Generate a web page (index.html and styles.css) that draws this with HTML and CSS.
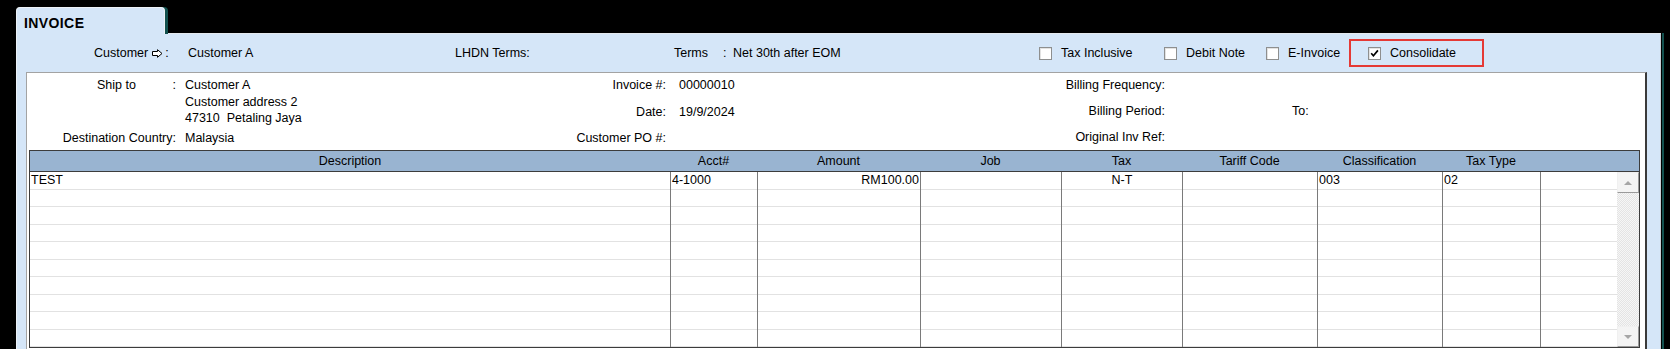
FILE: index.html
```html
<!DOCTYPE html>
<html lang="en">
<head>
    <meta charset="UTF-8">
    <title>Invoice</title>
    <link rel="stylesheet" href="styles.css">
</head>
<body>

<div class="window">
    <!-- Tab -->
    <div class="tab">INVOICE</div>

    <div class="panel">
        <!-- Baris atas: customer, terms, checkbox -->
        <div class="panel-head">
            <div class="hd-cust">Customer<svg class="arrow" width="11" height="9" viewBox="0 0 11 9"><path d="M0.5 2.5 H5.5 V0.7 L10 4.5 L5.5 8.3 V6.5 H0.5 Z" fill="#fff" stroke="#000" stroke-width="1"/></svg><span class="colon">:</span></div>
            <div class="hd-custval">Customer A</div>
            <div class="hd-lhdn">LHDN Terms:</div>
            <div class="hd-terms">Terms</div>
            <div class="hd-colon">:</div>
            <div class="hd-termsval">Net 30th after EOM</div>

            <div class="chk chk-tax"><span class="box"></span>Tax Inclusive</div>
            <div class="chk chk-debit"><span class="box"></span>Debit Note</div>
            <div class="chk chk-einv"><span class="box"></span>E-Invoice</div>
            <div class="chk chk-hl"><span class="box"><svg width="9" height="9" viewBox="0 0 9 9"><path d="M1.2 4.3 L3.4 6.8 L7.9 1.4" fill="none" stroke="#000" stroke-width="1.7"/></svg></span>Consolidate</div>
        </div>

        <div class="sheet">
            <!-- Info invoice -->
            <div class="info">
                <div class="info-left">
                    <div class="ship">
                        <div class="ship-label"><span>Ship to</span><span>:</span></div>
                        <div class="ship-val">
                            <div>Customer A</div>
                            <div>Customer address 2</div>
                            <div>47310&nbsp; Petaling Jaya</div>
                        </div>
                    </div>
                    <div class="dest">
                        <div class="dest-label">Destination Country:</div>
                        <div class="ship-val">Malaysia</div>
                    </div>
                </div>
                <div class="info-mid">
                    <div class="lbl">Invoice #:</div><div>00000010</div>
                    <div class="lbl">Date:</div><div>19/9/2024</div>
                    <div class="lbl">Customer PO #:</div><div></div>
                </div>
                <div class="info-right">
                    <div class="lbl">Billing Frequency:</div><div></div><div></div>
                    <div class="lbl">Billing Period:</div><div></div><div>To:</div>
                    <div class="lbl">Original Inv Ref:</div><div></div><div></div>
                </div>
            </div>

            <!-- Tabel item -->
            <div class="grid">
                <div class="grid-head">
                    <span>Description</span><span>Acct#</span><span>Amount</span><span>Job</span><span>Tax</span><span>Tariff Code</span><span>Classification</span><span>Tax Type</span><span></span>
                </div>
                <div class="grid-body">
                    <div class="rows">
                        <div class="row"><span>TEST</span><span>4-1000</span><span class="num">RM100.00</span><span></span><span class="mid">N-T</span><span></span><span>003</span><span>02</span><span></span></div>
                        <div class="row"><span></span><span></span><span></span><span></span><span></span><span></span><span></span><span></span><span></span></div>
                        <div class="row"><span></span><span></span><span></span><span></span><span></span><span></span><span></span><span></span><span></span></div>
                        <div class="row"><span></span><span></span><span></span><span></span><span></span><span></span><span></span><span></span><span></span></div>
                        <div class="row"><span></span><span></span><span></span><span></span><span></span><span></span><span></span><span></span><span></span></div>
                        <div class="row"><span></span><span></span><span></span><span></span><span></span><span></span><span></span><span></span><span></span></div>
                        <div class="row"><span></span><span></span><span></span><span></span><span></span><span></span><span></span><span></span><span></span></div>
                        <div class="row"><span></span><span></span><span></span><span></span><span></span><span></span><span></span><span></span><span></span></div>
                        <div class="row"><span></span><span></span><span></span><span></span><span></span><span></span><span></span><span></span><span></span></div>
                        <div class="row"><span></span><span></span><span></span><span></span><span></span><span></span><span></span><span></span><span></span></div>
                    </div>
                    <div class="vscroll">
                        <div class="sbtn"><span class="tri-up"></span></div>
                        <div class="track"></div>
                        <div class="sbtn"><span class="tri-down"></span></div>
                    </div>
                </div>
            </div>
        </div>
    </div>
</div>

</body>
</html>
```

FILE: styles.css
```css
body {
    margin: 0;
    height: 349px;
    overflow: hidden;
    background-color: #000;
    font-family: "Liberation Sans", Arial, sans-serif;
    font-size: 12.5px;
    color: #000;
}

.window {
    padding: 7px 0 0 16px;
    width: 1645px;
}

/* Tab */
.tab {
    position: relative;
    z-index: 1;
    width: 149px;
    height: 27px;
    margin-bottom: -1px;
    box-sizing: border-box;
    padding: 5px 0 0 7px;
    line-height: 20px;
    background-color: #d5e6f8;
    border: 1px solid #edf2f7;
    border-bottom: none;
    border-radius: 4px 4px 0 0;
    box-shadow: 3px 0 0 #12504e;
    font-size: 14px;
    font-weight: bold;
    letter-spacing: 0.4px;
}

.panel {
    height: 330px;
    box-sizing: border-box;
    background-color: #d5e6f8;
    border-top: 1px solid #e4e9ee;
    border-left: 1px solid #edf2f7;
    border-right: 1px solid #c6ced6;
    box-shadow: 1px 0 0 #000, 3px 0 0 #12504e;
}

/* Baris atas */
.panel-head {
    display: flex;
    align-items: center;
    height: 38px;
    padding-left: 77px;
    white-space: nowrap;
}

.hd-cust {
    width: 94px;
    display: flex;
    align-items: center;
}

.arrow {
    margin-left: 4px;
}

.colon {
    margin-left: 2px;
}

.hd-custval { width: 267px; }
.hd-lhdn { width: 219px; }
.hd-terms { width: 49px; }
.hd-colon { width: 10px; }
.hd-termsval { width: 306px; }

.chk {
    display: flex;
    align-items: center;
}

.chk-tax { width: 125px; }
.chk-debit { width: 102px; }
.chk-einv { width: 83px; }

.chk-hl {
    width: 135px;
    height: 28px;
    box-sizing: border-box;
    padding-left: 17px;
    border: 2px solid #e53935;
}

.box {
    width: 13px;
    height: 13px;
    box-sizing: border-box;
    margin-right: 9px;
    background-color: #fff;
    border: 1px solid #8e8f8f;
    box-shadow: inset 1px 1px 0 #e2e2e2;
    display: flex;
    justify-content: center;
    align-items: center;
}

/* Area putih */
.sheet {
    height: 300px;
    margin: 0 13px 0 9px;
    background-color: #fff;
    border-top: 1px solid #a3a3a3;
    border-left: 1px solid #a3a3a3;
    border-right: 2px solid #3a3a3a;
}

.info {
    display: flex;
    height: 77px;
    box-sizing: border-box;
    padding-top: 4px;
    white-space: nowrap;
}

.info-left {
    width: 493px;
}

.ship,
.dest {
    display: flex;
    line-height: 16.5px;
}

.dest {
    margin-top: 3.5px;
}

.ship-label {
    width: 149px;
    box-sizing: border-box;
    padding-left: 70px;
    display: flex;
    justify-content: space-between;
}

.dest-label {
    width: 149px;
    text-align: right;
}

.ship-val {
    margin-left: 9px;
}

.info-mid {
    width: 440px;
    display: grid;
    grid-template-columns: 146px 1fr;
    column-gap: 13px;
    row-gap: 10.5px;
    align-content: start;
    line-height: 16px;
}

.info-right {
    display: grid;
    grid-template-columns: 205px 127px 1fr;
    row-gap: 10px;
    align-content: start;
    line-height: 16px;
}

.lbl {
    text-align: right;
}

/* Tabel */
.grid {
    margin: 0 5px 0 2px;
    border: 1px solid #3c3c3c;
}

.grid-head {
    display: grid;
    grid-template-columns: 640px 87px 163px 141px 121px 135px 125px 98px 99px;
    height: 21px;
    box-sizing: border-box;
    line-height: 20px;
    background-color: #99b4d1;
    border-bottom: 1px solid #3c3c3c;
    text-align: center;
}

.grid-body {
    display: flex;
}

.rows {
    width: 1587px;
}

.row {
    display: grid;
    grid-template-columns: 640px 87px 163px 141px 121px 135px 125px 98px 77px;
    height: 17.5px;
}

.row span {
    box-sizing: border-box;
    padding: 0 1px;
    line-height: 17px;
    white-space: nowrap;
    overflow: hidden;
    border-left: 1px solid #7a7a7a;
    box-shadow: inset 0 -1px 0 #e2e2e2;
}

.row span:first-child {
    border-left: none;
}

.row .num {
    text-align: right;
}

.row .mid {
    text-align: center;
}

.vscroll {
    width: 22px;
    display: flex;
    flex-direction: column;
}

.sbtn {
    height: 21px;
    box-sizing: border-box;
    background-color: #f4f4f4;
    border: 1px solid;
    border-color: #f0f0f0 #9a9a9a #9a9a9a #f0f0f0;
    display: flex;
    justify-content: center;
    align-items: center;
}

.track {
    flex: 1;
    background-color: #f0f0f0;
    background-image: repeating-conic-gradient(#e4e4e4 0 25%, #f6f6f6 0 50%);
    background-size: 2px 2px;
}

.tri-up,
.tri-down {
    width: 0;
    height: 0;
    border-left: 4px solid transparent;
    border-right: 4px solid transparent;
}

.tri-up {
    border-bottom: 4px solid #a6a6a6;
}

.tri-down {
    border-top: 4px solid #a6a6a6;
}
```
